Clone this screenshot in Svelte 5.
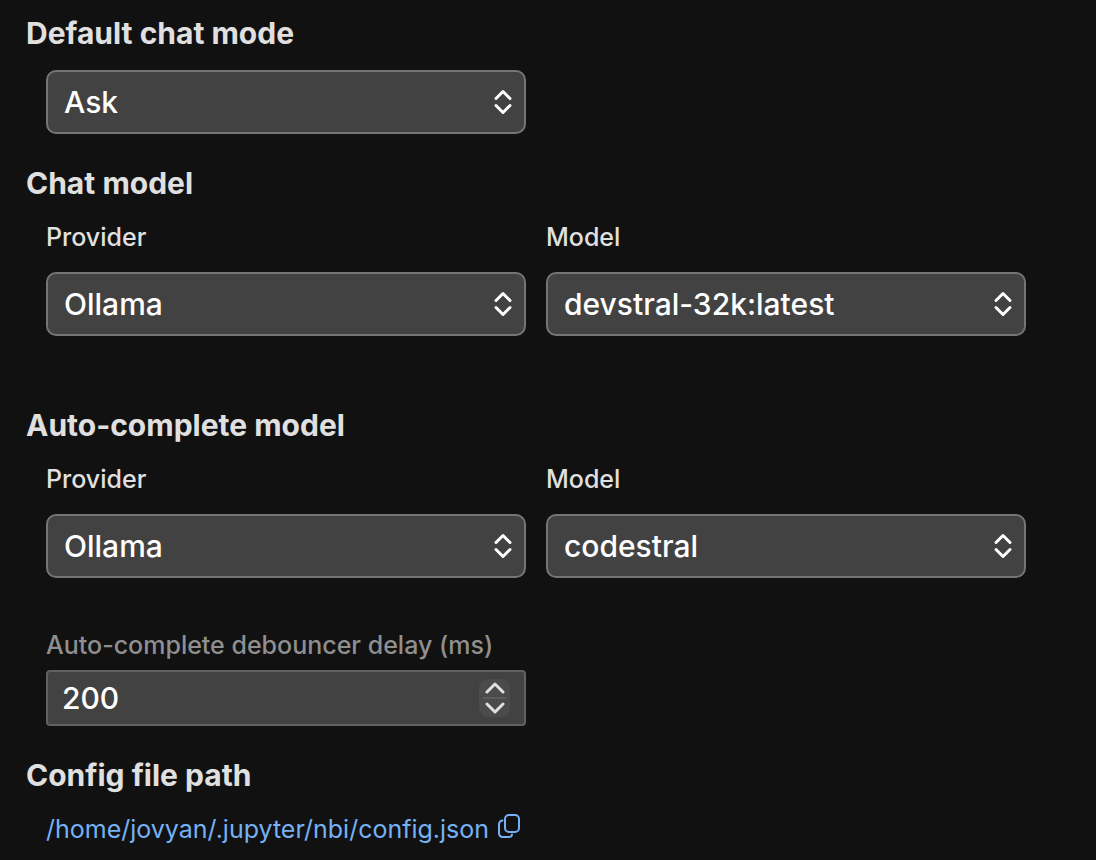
<script>
    let mode = 'ask';
    let delay = 200;
    let copied = false;

    const configPath = '/home/jovyan/.jupyter/nbi/config.json';

    const chatModels = ['devstral-32k:latest', 'codestral'];
    const completeModels = ['codestral', 'devstral-32k:latest'];

    let chat = { provider: 'ollama', model: chatModels[0] };
    let complete = { provider: 'ollama', model: completeModels[0] };

    function step(n) {
        delay = Math.max(0, delay + n);
    }

    async function copyPath() {
        try {
            await navigator.clipboard.writeText(configPath);
            copied = true;
        } catch (e) {
            console.error('Could not copy the path:', e);
        }
    }
</script>

{#snippet arrows()}
    <svg class="arrows" width="20" height="28" viewBox="0 0 20 28" aria-hidden="true">
        <path d="M3 10.5 10 3.5l7 7M3 17.5l7 7 7-7" />
    </svg>
{/snippet}

<main class="settings">
    <section>
        <h2 id="mode-title">Default chat mode</h2>
        <div class="body row">
            <div class="select">
                <select aria-labelledby="mode-title" bind:value={mode}>
                    <option value="ask">Ask</option>
                    <option value="agent">Agent</option>
                </select>
                {@render arrows()}
            </div>
        </div>
    </section>

    <section class="chat">
        <h2>Chat model</h2>
        <div class="body row">
            <div class="field">
                <label for="chat-provider">Provider</label>
                <div class="select">
                    <select id="chat-provider" bind:value={chat.provider}>
                        <option value="ollama">Ollama</option>
                    </select>
                    {@render arrows()}
                </div>
            </div>
            <div class="field">
                <label for="chat-model">Model</label>
                <div class="select">
                    <select id="chat-model" bind:value={chat.model}>
                        {#each chatModels as m}
                            <option value={m}>{m}</option>
                        {/each}
                    </select>
                    {@render arrows()}
                </div>
            </div>
        </div>
    </section>

    <section>
        <h2>Auto-complete model</h2>
        <div class="body row">
            <div class="field">
                <label for="complete-provider">Provider</label>
                <div class="select">
                    <select id="complete-provider" bind:value={complete.provider}>
                        <option value="ollama">Ollama</option>
                    </select>
                    {@render arrows()}
                </div>
            </div>
            <div class="field">
                <label for="complete-model">Model</label>
                <div class="select">
                    <select id="complete-model" bind:value={complete.model}>
                        {#each completeModels as m}
                            <option value={m}>{m}</option>
                        {/each}
                    </select>
                    {@render arrows()}
                </div>
            </div>
        </div>
        <div class="body row delay">
            <div class="field">
                <label for="delay">Auto-complete debouncer delay (ms)</label>
                <div class="number">
                    <input id="delay" type="number" min="0" bind:value={delay} />
                    <div class="spinner">
                        <button type="button" aria-label="Increase delay" on:click={() => step(1)}>
                            <svg width="20" height="12" viewBox="0 0 20 12"><path d="M2 10l8-8 8 8" /></svg>
                        </button>
                        <button type="button" aria-label="Decrease delay" on:click={() => step(-1)}>
                            <svg width="20" height="12" viewBox="0 0 20 12"><path d="M2 2l8 8 8-8" /></svg>
                        </button>
                    </div>
                </div>
            </div>
        </div>
    </section>

    <section>
        <h2>Config file path</h2>
        <div class="body path">
            <a href="#config">{configPath}</a>
            <button type="button" class="copy" aria-label={copied ? 'Copied' : 'Copy path'} on:click={copyPath}>
                <svg width="24" height="26" viewBox="0 0 24 26">
                    <rect x="8" y="2" width="14" height="17" rx="4" />
                    <path d="M5.5 7.5Q2 8 2 12v8q0 4 4 4h5q4 0 4-2.5" />
                </svg>
            </button>
        </div>
    </section>
</main>

<style>
    :global(body) {
        background: #111111;
    }
    .settings {
        display: flex;
        flex-direction: column;
        gap: 29px;
        padding: 13px 70px 14px 26px;
        font-family: Inter, "Liberation Sans", sans-serif;
        color: #e0e0e0;
    }
    h2 {
        margin: 0;
        font-size: 30px;
        line-height: 40px;
        font-weight: 700;
    }
    .body {
        margin-top: 17px;
        padding-left: 20px;
    }
    .row {
        display: grid;
        grid-template-columns: 1fr 1fr;
        gap: 20px;
    }
    .chat {
        padding-bottom: 40px;
    }
    .field {
        display: flex;
        flex-direction: column;
        gap: 18px;
    }
    label {
        font-size: 25px;
        font-weight: 500;
        line-height: 34px;
    }
    .select {
        position: relative;
    }
    select,
    input {
        display: block;
        box-sizing: border-box;
        width: 100%;
        margin: 0;
        background: #424242;
        color: #ffffff;
        font-family: inherit;
        font-size: 30px;
        font-weight: 500;
        outline: none;
        appearance: none;
    }
    select {
        height: 64px;
        padding: 0 40px 0 16px;
        border: 2px solid #757575;
        border-radius: 10px;
    }
    .arrows {
        position: absolute;
        right: 13px;
        top: 18px;
        pointer-events: none;
    }
    svg {
        display: block;
        fill: none;
        stroke: currentColor;
        stroke-width: 3;
        stroke-linecap: round;
        stroke-linejoin: round;
    }
    .arrows {
        color: #ffffff;
    }
    .delay {
        margin-top: 50px;
    }
    .delay .field {
        gap: 8px;
    }
    .delay label {
        color: #8f8f8f;
        white-space: nowrap;
    }
    .number {
        position: relative;
    }
    input {
        height: 56px;
        padding: 0 50px 0 14px;
        border: 2px solid #616161;
        border-radius: 4px;
        appearance: textfield;
    }
    input::-webkit-inner-spin-button {
        appearance: none;
        margin: 0;
    }
    .spinner {
        position: absolute;
        right: 16px;
        top: 9px;
        display: flex;
        flex-direction: column;
        width: 31px;
        height: 38px;
        border-radius: 9px;
        background: #4b4b4b;
    }
    button {
        border: none;
        padding: 0;
        background: none;
        color: inherit;
        cursor: pointer;
    }
    .spinner button {
        flex: 1;
        display: flex;
        align-items: center;
        justify-content: center;
    }
    .spinner button:first-child {
        margin: 0 4px;
        border-bottom: 2px solid #5c5c5c;
    }
    .path {
        display: flex;
        align-items: center;
        gap: 8px;
        font-size: 25px;
        line-height: 34px;
    }
    a,
    .copy {
        color: #75b2f5;
        text-decoration: none;
    }
    .copy svg {
        stroke-width: 2;
        margin-bottom: 6px;
    }
</style>
